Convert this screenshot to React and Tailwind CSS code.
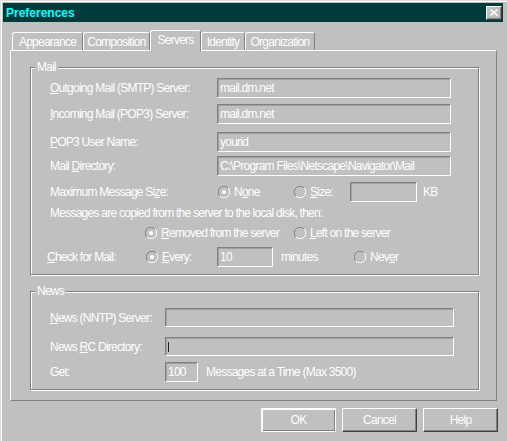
const font = "font-['Liberation_Sans',Arial,sans-serif]"

const RadioDot = ({ checked }) => (
    <svg width="12" height="12" viewBox="0 0 12 12" className="shrink-0">
        <path d="M10.1 1.9 A5.5 5.5 0 0 0 1.9 10.1" fill="none" stroke="#808080" strokeWidth="1" />
        <path d="M1.9 10.1 A5.5 5.5 0 0 0 10.1 1.9" fill="none" stroke="#ffffff" strokeWidth="1" />
        {checked && <circle cx="6" cy="6" r="2" fill="#ffffff" />}
    </svg>
)

const Radio = ({ checked = false, className = '', children }) => (
    <div className={`flex items-center gap-[4px] ${className}`}>
        <RadioDot checked={checked} />
        <span className="whitespace-nowrap">{children}</span>
    </div>
)

const Field = ({ className = '', children }) => (
    <div className={`flex items-center border border-t-[#808080] border-l-[#808080] border-b-white border-r-white shadow-[inset_1px_1px_0_#a0a0a0] pl-[2px] text-white whitespace-nowrap overflow-hidden ${className}`}>
        {children}
    </div>
)

const Group = ({ label, className = '', children }) => (
    <div className={`relative flex flex-col border border-[#808080] shadow-[inset_1px_1px_0_#fff,1px_1px_0_#fff] ${className}`}>
        <span className="absolute -top-[8px] left-[4px] bg-[#c0c0c0] px-[2px] leading-[14px]">{label}</span>
        {children}
    </div>
)

const tabs = [
    { label: 'Appearance', width: 'w-[71px]' },
    { label: 'Composition', width: 'w-[67px]' },
    { label: 'Servers', width: 'w-[51px]', active: true },
    { label: 'Identity', width: 'w-[44px]' },
    { label: 'Organization', width: 'w-[70px]' }
]

const Button = ({ isDefault = false, children }) => (
    <button
        type="button"
        className={`w-[75px] h-[24px] flex items-center justify-center border text-white ${
            isDefault
                ? 'border-white shadow-[inset_1px_1px_0_#fff,inset_-1px_-1px_0_#808080]'
                : 'border-t-white border-l-white border-r-[#404040] border-b-[#404040] shadow-[inset_-1px_-1px_0_#808080]'
        }`}
    >
        {children}
    </button>
)

export default function App() {
    return (
        <div className={`w-[507px] h-[441px] bg-[#c0c0c0] text-white text-[12px] leading-[14px] tracking-[-0.75px] shadow-[inset_1px_1px_0_#dfdfdf,inset_2px_2px_0_#fff] flex flex-col ${font}`}>
            {/* title bar */}
            <div className="mx-[3px] mt-[3px] h-[19px] w-[500px] bg-[#003b3b] flex items-center justify-between pl-[3px] pr-[1px]">
                <span className="font-bold text-[12px] tracking-normal text-[#00ffff]">Preferences</span>
                <div className="w-[16px] h-[14px] bg-[#c0c0c0] border border-t-white border-l-white border-r-[#404040] border-b-[#404040] shadow-[inset_-1px_-1px_0_#808080] flex items-center justify-center">
                    <svg width="8" height="7" viewBox="0 0 8 7">
                        <path d="M0.5 0.5 L7.5 6.5 M7.5 0.5 L0.5 6.5" stroke="#ffffff" strokeWidth="1.4" />
                    </svg>
                </div>
            </div>

            {/* tabs */}
            <div className="mt-[8px] ml-[12px] h-[20px] flex items-end">
                {tabs.map((tab) =>
                    tab.active ? (
                        <div
                            key={tab.label}
                            className={`${tab.width} relative z-10 -mb-px h-[21px] bg-[#c0c0c0] border-t border-l border-r border-t-white border-l-white border-r-[#808080] rounded-t-[3px] flex items-center justify-center pb-[2px]`}
                        >
                            {tab.label}
                        </div>
                    ) : (
                        <div
                            key={tab.label}
                            className={`${tab.width} h-[18px] border-t border-l border-r border-t-white border-l-white border-r-[#808080] rounded-t-[3px] flex items-center justify-center`}
                        >
                            {tab.label}
                        </div>
                    )
                )}
            </div>

            {/* panel */}
            <div className="ml-[10px] w-[487px] h-[351px] border border-t-white border-l-white border-r-[#808080] border-b-[#808080] flex flex-col">
                <Group label="Mail" className="ml-[19px] mt-[16px] w-[449px] h-[208px]">
                    <div className="flex items-center h-[20px] mt-[10px] pl-[19px]">
                        <span className="w-[167px] whitespace-nowrap"><u>O</u>utgoing Mail (SMTP) Server:</span>
                        <Field className="w-[234px] h-[20px]">mail.dm.net</Field>
                    </div>
                    <div className="flex items-center h-[20px] mt-[6px] pl-[19px]">
                        <span className="w-[167px] whitespace-nowrap"><u>I</u>ncoming Mail (POP3) Server:</span>
                        <Field className="w-[234px] h-[20px]">mail.dm.net</Field>
                    </div>
                    <div className="flex items-center h-[20px] mt-[8px] pl-[19px]">
                        <span className="w-[167px] whitespace-nowrap"><u>P</u>OP3 User Name:</span>
                        <Field className="w-[234px] h-[20px]">yourid</Field>
                    </div>
                    <div className="flex items-center h-[20px] mt-[4px] pl-[19px]">
                        <span className="w-[167px] whitespace-nowrap">Mail <u>D</u>irectory:</span>
                        <Field className="w-[234px] h-[20px]">C:\Program Files\Netscape\Navigator\Mail</Field>
                    </div>
                    <div className="flex items-center h-[20px] mt-[6px] pl-[19px]">
                        <span className="w-[168px] whitespace-nowrap">Maximum Message Si<u>z</u>e:</span>
                        <Radio checked className="w-[76px]">N<u>o</u>ne</Radio>
                        <Radio className="w-[56px]"><u>S</u>ize:</Radio>
                        <Field className="w-[67px] h-[20px]" />
                        <span className="ml-[6px]">KB</span>
                    </div>
                    <div className="h-[14px] mt-[4px] pl-[19px] whitespace-nowrap">
                        Messages are copied from the server to the local disk, then:
                    </div>
                    <div className="flex items-center h-[14px] mt-[6px] pl-[114px]">
                        <Radio checked className="w-[149px]"><u>R</u>emoved from the server</Radio>
                        <Radio><u>L</u>eft on the server</Radio>
                    </div>
                    <div className="flex items-center h-[20px] mt-[7px] pl-[16px]">
                        <span className="w-[99px] whitespace-nowrap"><u>C</u>heck for Mail:</span>
                        <Radio checked className="w-[71px]"><u>E</u>very:</Radio>
                        <Field className="w-[56px] h-[20px]">10</Field>
                        <span className="ml-[8px] w-[73px]">minutes</span>
                        <Radio>Nev<u>e</u>r</Radio>
                    </div>
                </Group>

                <Group label="News" className="ml-[19px] mt-[16px] w-[449px] h-[99px]">
                    <div className="flex items-center h-[19px] mt-[16px] pl-[19px]">
                        <span className="w-[115px] whitespace-nowrap"><u>N</u>ews (NNTP) Server:</span>
                        <Field className="w-[289px] h-[19px]" />
                    </div>
                    <div className="flex items-center h-[19px] mt-[10px] pl-[19px]">
                        <span className="w-[115px] whitespace-nowrap">News <u>R</u>C Directory:</span>
                        <Field className="w-[289px] h-[19px]">
                            <span className="w-px h-[10px] bg-[#202020]" />
                        </Field>
                    </div>
                    <div className="flex items-center h-[20px] mt-[6px] pl-[19px]">
                        <span className="w-[115px]">Get:</span>
                        <Field className="w-[33px] h-[20px]">100</Field>
                        <span className="ml-[8px] whitespace-nowrap">Messages at a Time (Max 3500)</span>
                    </div>
                </Group>
            </div>

            {/* buttons */}
            <div className="mt-[7px] pr-[9px] flex justify-end gap-[6px]">
                <Button isDefault>OK</Button>
                <Button>Cancel</Button>
                <Button>Help</Button>
            </div>
        </div>
    )
}
